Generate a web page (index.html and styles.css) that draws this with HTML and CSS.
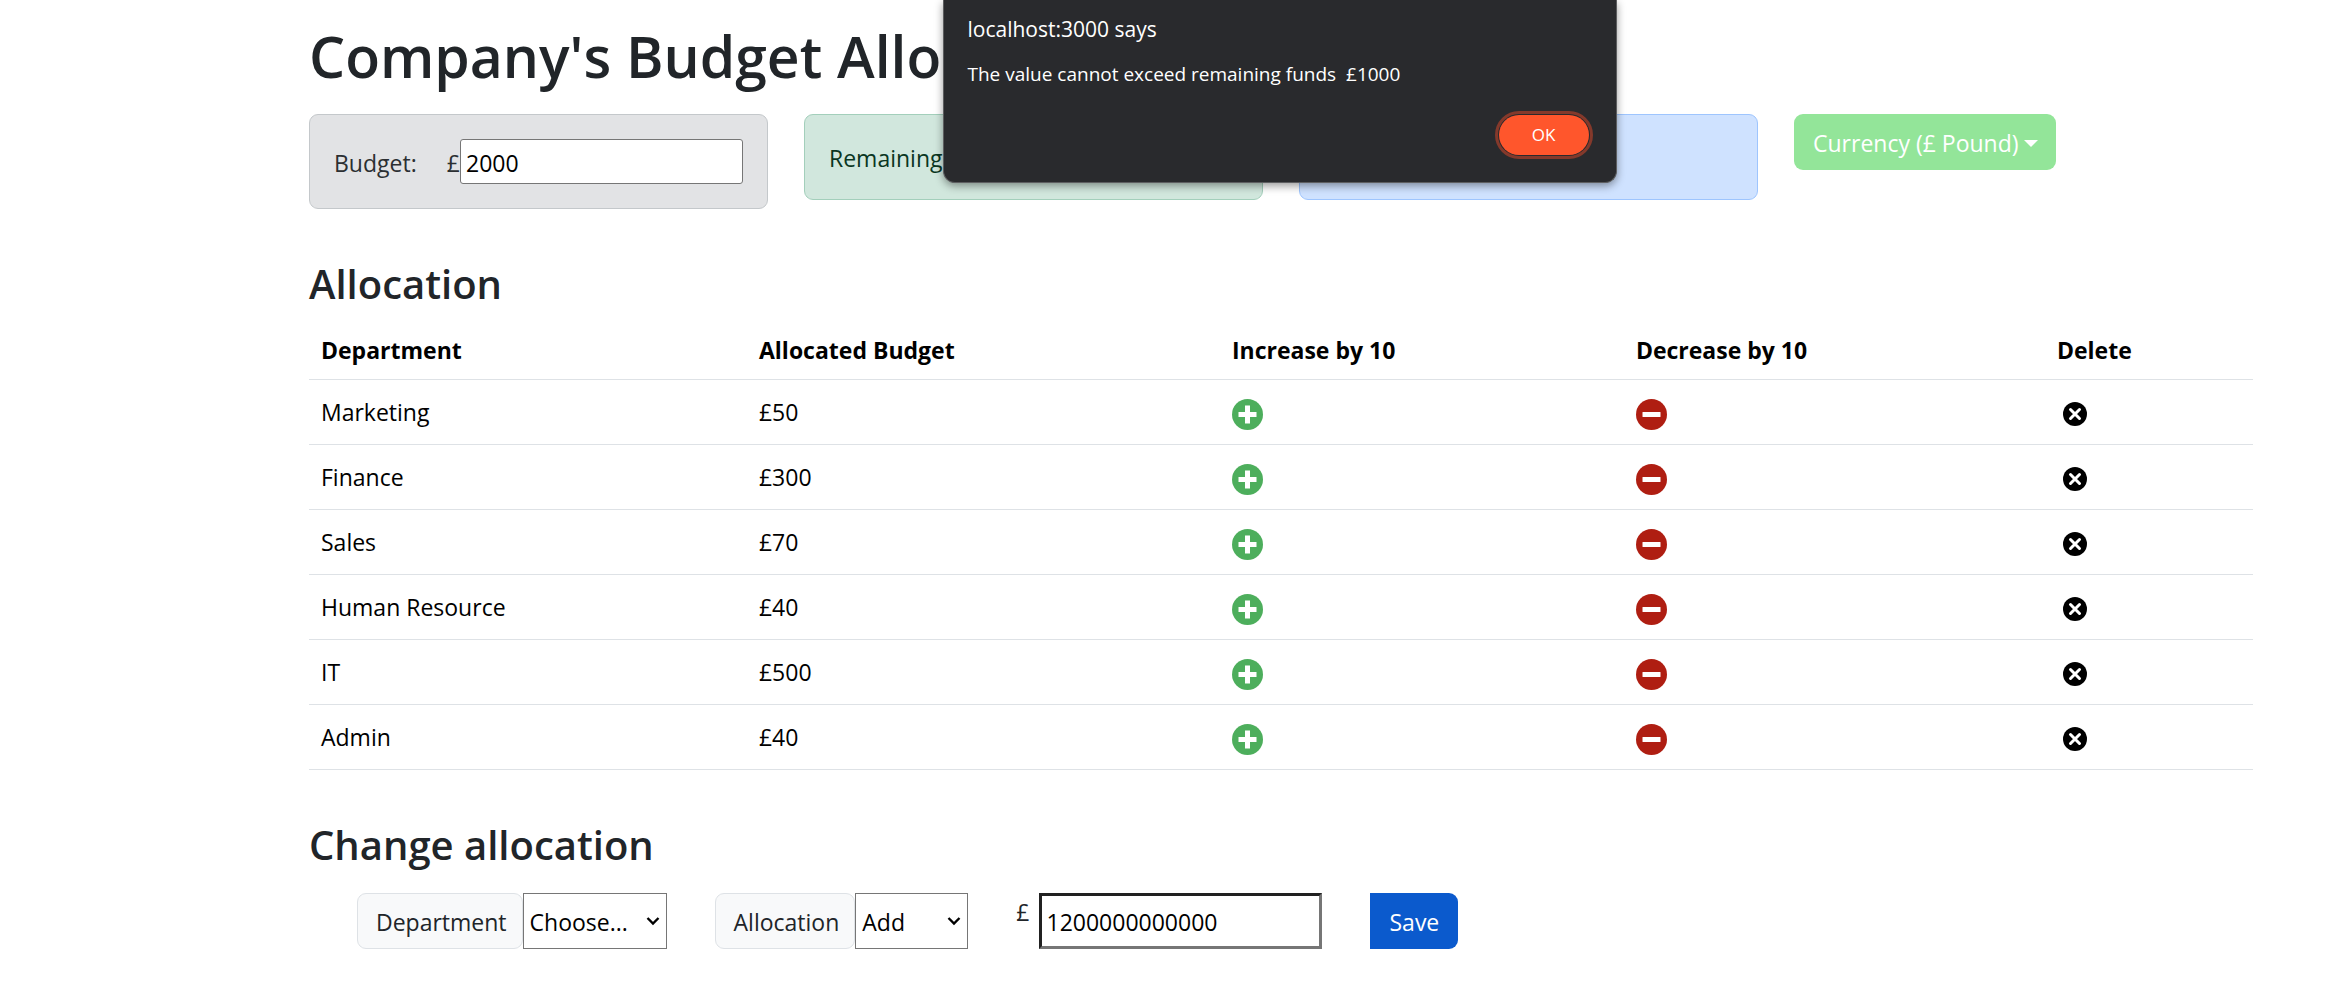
FILE: index.html
```
<!DOCTYPE html>
<html lang="en">
<head>
<meta charset="utf-8">
<meta name="viewport" content="width=device-width, initial-scale=1">
<title>Company's Budget Allocation</title>
<link rel="stylesheet" href="styles.css">
</head>
<body>
<svg class="sprite" aria-hidden="true">
  <symbol id="plus" viewBox="0 0 31 31"><circle cx="15.500" cy="15.500" r="15.500" fill="#4dae5c"/><path d="M15.500 6.500v18M6.500 15.500h18" stroke="#fff" stroke-width="5"/></symbol>
  <symbol id="minus" viewBox="0 0 31 31"><circle cx="15.500" cy="15.500" r="15.500" fill="#af1e12"/><rect x="6.500" y="13" width="18" height="5" rx=".5" fill="#fff"/></symbol>
  <symbol id="cross" viewBox="0 0 24 24"><circle cx="12" cy="12" r="12" fill="#000"/><path d="M7.500 7.500l9 9M16.500 7.500l-9 9" stroke="#fff" stroke-width="3" stroke-linecap="round"/></symbol>
</svg>
<main class="container">
  <h1 class="title">Company's Budget Allocation</h1>
  <div class="summary">
    <div class="card card-secondary">
      <label class="budget-label" for="budget">Budget:</label>
      <span class="budget-unit">£</span><input class="budget-input" id="budget" type="text" value="2000">
    </div>
    <div class="card card-success">Remaining: £1000</div>
    <div class="card card-primary">Spent so far: £1000</div>
    <button class="currency" type="button">Currency (£ Pound)<span class="caret"></span></button>
  </div>

  <h2 class="heading">Allocation</h2>
  <table class="table">
    <thead>
      <tr><th class="c-dept">Department</th><th class="c-budget">Allocated Budget</th><th class="c-inc">Increase by 10</th><th class="c-dec">Decrease by 10</th><th>Delete</th></tr>
    </thead>
    <tbody>
      <tr><td>Marketing</td><td>£50</td>
        <td><button class="icon-btn" aria-label="Increase"><svg class="icon"><use href="#plus"/></svg></button></td>
        <td><button class="icon-btn" aria-label="Decrease"><svg class="icon"><use href="#minus"/></svg></button></td>
        <td><button class="icon-btn delete" aria-label="Delete"><svg class="icon icon-sm"><use href="#cross"/></svg></button></td></tr>
      <tr><td>Finance</td><td>£300</td>
        <td><button class="icon-btn" aria-label="Increase"><svg class="icon"><use href="#plus"/></svg></button></td>
        <td><button class="icon-btn" aria-label="Decrease"><svg class="icon"><use href="#minus"/></svg></button></td>
        <td><button class="icon-btn delete" aria-label="Delete"><svg class="icon icon-sm"><use href="#cross"/></svg></button></td></tr>
      <tr><td>Sales</td><td>£70</td>
        <td><button class="icon-btn" aria-label="Increase"><svg class="icon"><use href="#plus"/></svg></button></td>
        <td><button class="icon-btn" aria-label="Decrease"><svg class="icon"><use href="#minus"/></svg></button></td>
        <td><button class="icon-btn delete" aria-label="Delete"><svg class="icon icon-sm"><use href="#cross"/></svg></button></td></tr>
      <tr><td>Human Resource</td><td>£40</td>
        <td><button class="icon-btn" aria-label="Increase"><svg class="icon"><use href="#plus"/></svg></button></td>
        <td><button class="icon-btn" aria-label="Decrease"><svg class="icon"><use href="#minus"/></svg></button></td>
        <td><button class="icon-btn delete" aria-label="Delete"><svg class="icon icon-sm"><use href="#cross"/></svg></button></td></tr>
      <tr><td>IT</td><td>£500</td>
        <td><button class="icon-btn" aria-label="Increase"><svg class="icon"><use href="#plus"/></svg></button></td>
        <td><button class="icon-btn" aria-label="Decrease"><svg class="icon"><use href="#minus"/></svg></button></td>
        <td><button class="icon-btn delete" aria-label="Delete"><svg class="icon icon-sm"><use href="#cross"/></svg></button></td></tr>
      <tr><td>Admin</td><td>£40</td>
        <td><button class="icon-btn" aria-label="Increase"><svg class="icon"><use href="#plus"/></svg></button></td>
        <td><button class="icon-btn" aria-label="Decrease"><svg class="icon"><use href="#minus"/></svg></button></td>
        <td><button class="icon-btn delete" aria-label="Delete"><svg class="icon icon-sm"><use href="#cross"/></svg></button></td></tr>
    </tbody>
  </table>

  <h2 class="heading">Change allocation</h2>
  <form class="form">
    <div class="group">
      <label class="group-label" for="department">Department</label>
      <span class="select-wrap"><select class="select select-dept" id="department"><option>Choose...</option><option>Marketing</option><option>Finance</option><option>Sales</option><option>IT</option><option>Admin</option></select><svg class="chevron" viewBox="0 0 14 10"><path d="M1.500 2l5.500 5.500L12.500 2" fill="none" stroke="#000" stroke-width="2.400"/></svg></span>
    </div>
    <div class="group">
      <label class="group-label" for="action">Allocation</label>
      <span class="select-wrap"><select class="select select-action" id="action"><option>Add</option><option>Reduce</option></select><svg class="chevron" viewBox="0 0 14 10"><path d="M1.500 2l5.500 5.500L12.500 2" fill="none" stroke="#000" stroke-width="2.400"/></svg></span>
    </div>
    <div class="group amount">
      <label class="pound" for="cost">£</label>
      <input class="cost" id="cost" type="text" value="1200000000000">
    </div>
    <button class="save" type="button">Save</button>
  </form>

  <div class="dialog-layer">
    <div class="dialog" role="alertdialog" aria-labelledby="dialog-title" aria-describedby="dialog-text">
      <h2 class="dialog-title" id="dialog-title">localhost:3000 says</h2>
      <p class="dialog-text" id="dialog-text">The value cannot exceed remaining funds&nbsp; £1000</p>
      <button class="ok" type="button">OK</button>
    </div>
  </div>
</main>
</body>
</html>
```
FILE: styles.css
```
*, *::before, *::after { box-sizing: border-box; }

body {
  margin: 0;
  padding-left: 210px;
  background: #fff;
  color: #212529;
  font-family: "Open Sans", "Noto Sans", sans-serif;
  font-size: 23px;
  line-height: 36px;
}

button, input, select { margin: 0; font: inherit; }

.sprite { display: none; }

.container {
  position: relative;
  max-width: 1980px;
  margin: 0 auto;
  padding: 20px 18px;
}

.title {
  margin: 0 0 22px;
  font-size: 57px;
  font-weight: 600;
  line-height: 72px;
}

.summary {
  display: grid;
  grid-template-columns: repeat(4, 1fr);
  gap: 36px;
  align-items: start;
}

.card {
  padding: 25px 24px 23px;
  border: 1px solid;
  border-radius: 9px;
}

.card-secondary {
  display: flex;
  align-items: center;
  padding: 24px;
  background: #e2e3e5;
  border-color: #c4c8cb;
  color: #2b2f32;
}
.card-success { background: #d1e7dd; border-color: #a3cfbb; color: #0a3622; }
.card-primary { background: #cfe2ff; border-color: #9ec5fe; color: #052c65; }

.budget-label { flex: 1; padding-top: 2px; }
.budget-unit { padding-top: 2px; }

.budget-input {
  width: 283px;
  height: 45px;
  padding: 4px 5px 2px;
  border: 1px solid #767676;
  border-radius: 3px;
  background: #fff;
  color: #000;
}

.currency {
  display: flex;
  align-items: center;
  justify-self: start;
  gap: 5px;
  height: 56px;
  padding: 2px 18px 0 19px;
  border: 0;
  border-radius: 9px;
  background: #93e599;
  color: #fff;
}

.caret {
  border: 7px solid transparent;
  border-top-color: #fff;
  border-bottom: 0;
}

.heading {
  margin: 50px 0 10px;
  font-size: 40px;
  font-weight: 600;
  line-height: 50px;
}

.table {
  width: 100%;
  table-layout: fixed;
  border-collapse: collapse;
  color: #000;
}

.table th, .table td {
  padding: 0 12px;
  border-bottom: 1px solid #dee2e6;
  text-align: left;
}
.table th { height: 60px; padding-top: 2px; font-weight: 700; }
.table td { height: 65px; }

.c-dept { width: 22.530%; }
.c-budget { width: 24.330%; }
.c-inc { width: 20.780%; }
.c-dec { width: 21.660%; }

.icon-btn {
  display: block;
  padding: 5px 0 0;
  border: 0;
  background: none;
}
.delete { padding-left: 6px; }
.icon { display: block; width: 31px; height: 31px; }
.icon-sm { width: 24px; height: 24px; }

.form {
  display: flex;
  gap: 48px;
  padding: 13px 0 0 48px;
}

.group { display: flex; height: 56px; }

.group-label {
  padding: 10px 15px 8px 18px;
  border: 1px solid #dee2e6;
  border-radius: 9px;
  background: #f8f9fa;
}

.select-wrap { display: flex; position: relative; }

.select {
  height: 56px;
  padding: 2px 6px 0;
  border: 1px solid #767676;
  border-radius: 0;
  background: #fff;
  color: #000;
  appearance: none;
}
.select-dept { width: 144px; }
.select-action { width: 113px; }

.chevron {
  position: absolute;
  top: 23px;
  right: 7px;
  width: 14px;
  height: 10px;
  pointer-events: none;
}

.amount { gap: 10px; }
.pound { padding-top: 1px; }

.cost {
  width: 283px;
  padding: 4px 4px 2px;
  border: 3px inset #767676;
  background: #fff;
  color: #000;
}

.save {
  height: 56px;
  padding: 2px 19px 0;
  border: 0;
  border-radius: 0 9px 9px 0;
  background: #0b5acd;
  color: #fff;
}

.dialog-layer {
  position: absolute;
  top: 0;
  left: 0;
  right: 0;
  display: flex;
  justify-content: center;
  padding-right: 3px;
  pointer-events: none;
}

.dialog {
  display: flex;
  flex-direction: column;
  width: 674px;
  padding: 14px 27px 27px 24px;
  border: 1px solid #5d5e60;
  border-top: 0;
  border-radius: 0 0 12px 12px;
  background: #292a2d;
  box-shadow: 0 3px 8px rgba(0, 0, 0, .4);
  color: #fff;
  pointer-events: auto;
}

.dialog-title {
  margin: 0 0 15px;
  font-size: 21px;
  font-weight: 400;
  line-height: 30px;
}

.dialog-text {
  margin: 0 0 26px;
  font-size: 19px;
  line-height: 30px;
}

.ok {
  align-self: flex-end;
  width: 90px;
  height: 40px;
  padding: 0;
  border: 0;
  border-radius: 20px;
  outline: 3px solid #84392b;
  outline-offset: 1px;
  background: #ff562c;
  color: #fff;
  font-size: 17px;
  font-weight: 500;
}
```
